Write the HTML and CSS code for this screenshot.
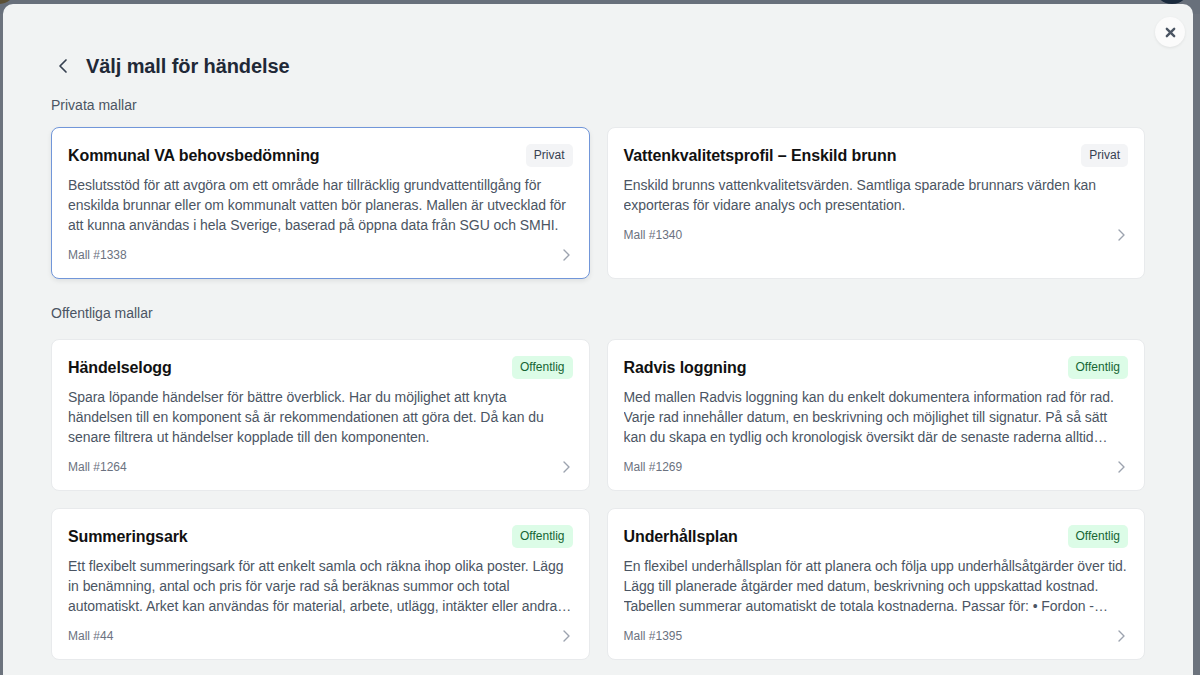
FILE: index.html
```html
<!DOCTYPE html>
<html lang="sv">
<head>
<meta charset="utf-8">
<title>Välj mall för händelse</title>
<link rel="stylesheet" href="styles.css">
</head>
<body>
<header class="topbar">
  <div class="brand">
    <span class="brand-mark"></span>
    <span class="brand-name">WMH AXX</span>
  </div>
  <nav class="nav">
    <span>Dashboard</span>
    <span>Arbetsytor</span>
    <span>Info</span>
    <span class="avatar"></span>
  </nav>
</header>

<div class="overlay"></div>

<div class="modal" role="dialog">
  <button class="close" aria-label="Stäng">
    <svg width="11" height="11" viewBox="0 0 12 12"><path d="M2 2 L10 10 M10 2 L2 10" stroke="#4b5563" stroke-width="2.6" stroke-linecap="round"/></svg>
  </button>

  <div class="modal-head">
    <button class="back" aria-label="Tillbaka">
      <svg width="12" height="16" viewBox="0 0 12 16"><path d="M9 2 L3 8 L9 14" fill="none" stroke="#374151" stroke-width="1.7" stroke-linecap="round" stroke-linejoin="round"/></svg>
    </button>
    <h1 class="modal-title">Välj mall för händelse</h1>
  </div>

  <section class="section">
    <h2 class="section-label">Privata mallar</h2>
    <div class="grid">
      <article class="card card-active">
        <div class="card-head">
          <h3 class="card-title">Kommunal VA behovsbedömning</h3>
          <span class="badge badge-private">Privat</span>
        </div>
        <p class="card-desc">Beslutsstöd för att avgöra om ett område har tillräcklig grundvattentillgång för enskilda brunnar eller om kommunalt vatten bör planeras. Mallen är utvecklad för att kunna användas i hela Sverige, baserad på öppna data från SGU och SMHI.</p>
        <div class="card-foot"><span>Mall #1338</span><svg class="chev" width="8" height="12" viewBox="0 0 8 12"><path d="M2 1 L7 6 L2 11" fill="none" stroke="#9ca3af" stroke-width="1.4" stroke-linecap="round" stroke-linejoin="round"/></svg></div>
      </article>
      <article class="card">
        <div class="card-head">
          <h3 class="card-title">Vattenkvalitetsprofil – Enskild brunn</h3>
          <span class="badge badge-private">Privat</span>
        </div>
        <p class="card-desc">Enskild brunns vattenkvalitetsvärden. Samtliga sparade brunnars värden kan exporteras för vidare analys och presentation.</p>
        <div class="card-foot"><span>Mall #1340</span><svg class="chev" width="8" height="12" viewBox="0 0 8 12"><path d="M2 1 L7 6 L2 11" fill="none" stroke="#9ca3af" stroke-width="1.4" stroke-linecap="round" stroke-linejoin="round"/></svg></div>
      </article>
    </div>
  </section>

  <section class="section section-public">
    <h2 class="section-label">Offentliga mallar</h2>
    <div class="grid">
      <article class="card">
        <div class="card-head">
          <h3 class="card-title">Händelselogg</h3>
          <span class="badge badge-public">Offentlig</span>
        </div>
        <p class="card-desc">Spara löpande händelser för bättre överblick. Har du möjlighet att knyta händelsen till en komponent så är rekommendationen att göra det. Då kan du senare filtrera ut händelser kopplade till den komponenten.</p>
        <div class="card-foot"><span>Mall #1264</span><svg class="chev" width="8" height="12" viewBox="0 0 8 12"><path d="M2 1 L7 6 L2 11" fill="none" stroke="#9ca3af" stroke-width="1.4" stroke-linecap="round" stroke-linejoin="round"/></svg></div>
      </article>
      <article class="card">
        <div class="card-head">
          <h3 class="card-title">Radvis loggning</h3>
          <span class="badge badge-public">Offentlig</span>
        </div>
        <p class="card-desc">Med mallen Radvis loggning kan du enkelt dokumentera information rad för rad. Varje rad innehåller datum, en beskrivning och möjlighet till signatur. På så sätt kan du skapa en tydlig och kronologisk översikt där de senaste raderna alltid hamnar överst i listan.</p>
        <div class="card-foot"><span>Mall #1269</span><svg class="chev" width="8" height="12" viewBox="0 0 8 12"><path d="M2 1 L7 6 L2 11" fill="none" stroke="#9ca3af" stroke-width="1.4" stroke-linecap="round" stroke-linejoin="round"/></svg></div>
      </article>
      <article class="card">
        <div class="card-head">
          <h3 class="card-title">Summeringsark</h3>
          <span class="badge badge-public">Offentlig</span>
        </div>
        <p class="card-desc">Ett flexibelt summeringsark för att enkelt samla och räkna ihop olika poster. Lägg in benämning, antal och pris för varje rad så beräknas summor och total automatiskt. Arket kan användas för material, arbete, utlägg, intäkter eller andra kostnader.</p>
        <div class="card-foot"><span>Mall #44</span><svg class="chev" width="8" height="12" viewBox="0 0 8 12"><path d="M2 1 L7 6 L2 11" fill="none" stroke="#9ca3af" stroke-width="1.4" stroke-linecap="round" stroke-linejoin="round"/></svg></div>
      </article>
      <article class="card">
        <div class="card-head">
          <h3 class="card-title">Underhållsplan</h3>
          <span class="badge badge-public">Offentlig</span>
        </div>
        <p class="card-desc">En flexibel underhållsplan för att planera och följa upp underhållsåtgärder över tid. Lägg till planerade åtgärder med datum, beskrivning och uppskattad kostnad. Tabellen summerar automatiskt de totala kostnaderna. Passar för: • Fordon - Fastigheter - Maskiner</p>
        <div class="card-foot"><span>Mall #1395</span><svg class="chev" width="8" height="12" viewBox="0 0 8 12"><path d="M2 1 L7 6 L2 11" fill="none" stroke="#9ca3af" stroke-width="1.4" stroke-linecap="round" stroke-linejoin="round"/></svg></div>
      </article>
    </div>
  </section>
</div>
</body>
</html>
```
FILE: styles.css
```css
* { box-sizing: border-box; }

html, body {
  margin: 0;
  height: 100%;
  overflow: hidden;
}

body {
  font-family: "Liberation Sans", Arial, sans-serif;
  background: #f3f4f6;
  color: #111827;
}

.topbar {
  height: 60px;
  margin-top: -46px;
  display: flex;
  align-items: flex-end;
  justify-content: space-between;
  padding: 0 20px 10px 0;
  background: #e9edf1;
}

.brand {
  display: flex;
  align-items: flex-end;
  gap: 28px;
}

.brand-mark {
  width: 34px;
  height: 34px;
  border-radius: 50%;
  background: #c99a3a;
  margin-left: -18px;
}

.brand-name {
  font-size: 40px;
  color: #1f3550;
  line-height: 1;
  letter-spacing: 3px;
}

.nav {
  display: flex;
  align-items: center;
  gap: 30px;
  font-size: 16px;
  color: #1f3550;
}

.avatar {
  width: 36px;
  height: 36px;
  border-radius: 50%;
  background: #1f3550;
  margin-right: -10px;
}

.overlay {
  position: fixed;
  inset: 0;
  background: rgba(24, 36, 50, 0.62);
}

.modal {
  position: fixed;
  left: 3px;
  top: 4px;
  width: 1190px;
  height: 720px;
  background: #f1f3f3;
  border-radius: 10px;
  padding: 40px 48px;
}

.close {
  position: absolute;
  top: 13px;
  right: 8px;
  width: 30px;
  height: 30px;
  border-radius: 50%;
  border: none;
  background: #fbfbfb;
  box-shadow: 0 1px 3px rgba(0, 0, 0, 0.08);
  display: flex;
  align-items: center;
  justify-content: center;
  padding: 0;
}

.modal-head {
  display: flex;
  align-items: center;
  gap: 11px;
  height: 44px;
  margin-bottom: 7px;
}

.back {
  width: 24px;
  height: 24px;
  border: none;
  background: none;
  padding: 0;
  display: flex;
  align-items: center;
  justify-content: center;
}

.modal-title {
  margin: 0;
  font-size: 20px;
  font-weight: 700;
  color: #1f2937;
  letter-spacing: -0.1px;
}

.section-label {
  margin: 0 0 12px;
  font-size: 14px;
  font-weight: 400;
  line-height: 20px;
  color: #4b5563;
}

.section-public {
  margin-top: 24px;
}

.section-public .section-label {
  margin-bottom: 16px;
}

.grid {
  display: grid;
  grid-template-columns: 1fr 1fr;
  gap: 17px;
}

.card {
  background: #fff;
  border: 1px solid #e8eaec;
  border-radius: 8px;
  padding: 16px 16px 15px;
  display: flex;
  flex-direction: column;
}

.card-active {
  border-color: #7196d9;
  box-shadow: 0 2px 5px rgba(0, 0, 0, 0.08);
}

.card-head {
  display: flex;
  align-items: center;
  justify-content: space-between;
  gap: 12px;
  height: 23px;
}

.card-title {
  margin: 0;
  font-size: 16px;
  font-weight: 700;
  color: #111111;
  line-height: 23px;
  letter-spacing: -0.1px;
}

.badge {
  font-size: 12px;
  line-height: 15px;
  padding: 4px 8px;
  border-radius: 5px;
}

.badge-private {
  background: #f3f4f6;
  color: #374151;
}

.badge-public {
  background: #dcfce7;
  color: #166534;
}

.card-desc {
  margin: 8px 0 0;
  font-size: 14px;
  line-height: 20px;
  color: #4b5563;
  letter-spacing: -0.05px;
  display: -webkit-box;
  -webkit-line-clamp: 3;
  -webkit-box-orient: vertical;
  overflow: hidden;
}

.card-foot {
  margin-top: 12px;
  display: flex;
  align-items: center;
  justify-content: space-between;
  font-size: 12px;
  line-height: 16px;
  color: #6b7280;
  padding-right: 3px;
}
```
